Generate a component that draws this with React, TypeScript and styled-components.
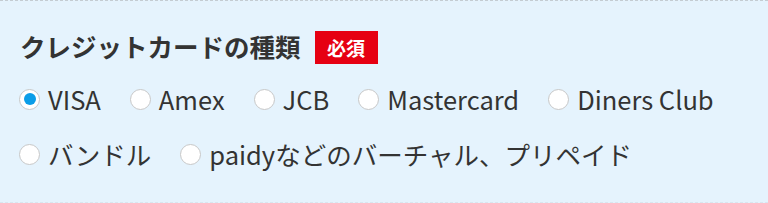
import React from "react";
import styled, { createGlobalStyle } from "styled-components";

const GlobalStyle = createGlobalStyle`
  html, body {
    margin: 0;
    padding: 0;
    background: #e5f3fd;
  }
`;

const rows = [
  ["VISA", "Amex", "JCB", "Mastercard", "Diners Club"],
  ["バンドル", "paidyなどのバーチャル、プリペイド"],
];

const App: React.FC = () => {
  const [selected, setSelected] = React.useState("VISA");

  return (
    <>
      <GlobalStyle />
      <Section>
        <TitleRow>
          <Title>クレジットカードの種類</Title>
          <Badge>必須</Badge>
        </TitleRow>
        <Options>
          {rows.map((row, i) => (
            <OptionRow key={i}>
              {row.map((card) => (
                <Option key={card} onClick={() => setSelected(card)}>
                  <Radio checked={selected === card} />
                  <span>{card}</span>
                </Option>
              ))}
            </OptionRow>
          ))}
        </Options>
      </Section>
    </>
  );
};

export default App;

const Section = styled.section`
  box-sizing: border-box;
  width: 768px;
  height: 203px;
  padding: 29px 19px 28px;
  border-top: 1px dashed #c4ccd2;
  border-bottom: 1px dashed #d8e6f0;
  background: #e5f3fd;
  color: #333;
  font-family: "Noto Sans CJK JP", "Noto Sans", sans-serif;
`;

const TitleRow = styled.div`
  display: flex;
  align-items: center;
  gap: 14px;
  height: 34px;
  margin-bottom: 15px;
`;

const Title = styled.h2`
  margin: 0 0 3px;
  padding-left: 1px;
  font-size: 25.5px;
  font-weight: 700;
  color: #333;
  line-height: 1;
`;

const Badge = styled.span`
  display: inline-flex;
  align-items: center;
  justify-content: center;
  width: 63px;
  height: 33px;
  background: #e60012;
  color: #fff;
  font-size: 19px;
  font-weight: 700;
`;

const Options = styled.div`
  display: flex;
  flex-direction: column;
  gap: 15px;
`;

const OptionRow = styled.div`
  display: flex;
  gap: 29px;
`;

const Option = styled.label`
  display: flex;
  align-items: center;
  gap: 8px;
  height: 40px;
  font-size: 25.5px;
  line-height: 40px;
  cursor: pointer;
  white-space: nowrap;
`;

const Radio = styled.span<{ checked: boolean }>`
  position: relative;
  box-sizing: border-box;
  width: 21px;
  height: 21px;
  border-radius: 50%;
  border: 1.5px solid #c8c8c8;
  background: #fff;
  flex-shrink: 0;

  &::after {
    content: "";
    display: ${(p) => (p.checked ? "block" : "none")};
    position: absolute;
    left: 50%;
    top: 50%;
    width: 12px;
    height: 12px;
    margin: -6px 0 0 -6px;
    border-radius: 50%;
    background: #0b9de8;
  }
`;
